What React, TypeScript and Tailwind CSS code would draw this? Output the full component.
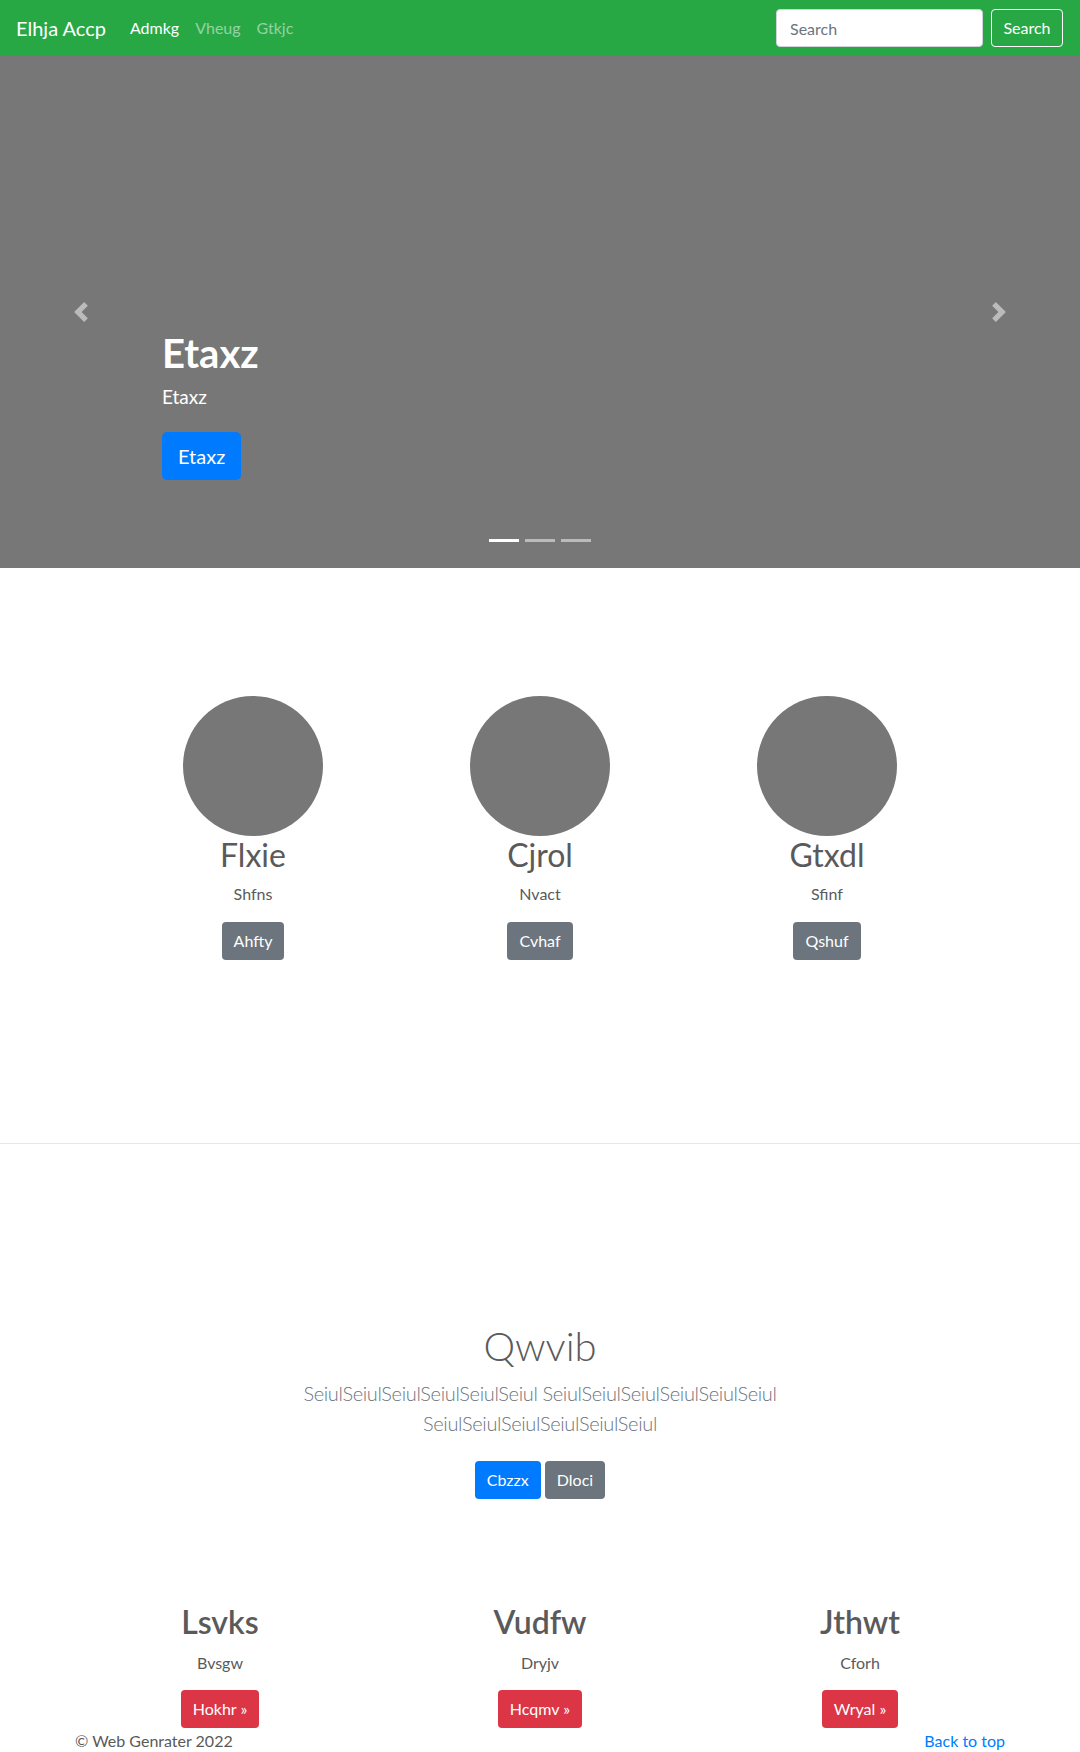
const font = "font-['Lato','Liberation_Sans',sans-serif]";

function Chevron({ dir }: { dir: "prev" | "next" }) {
  return (
    <svg width="20" height="20" viewBox="0 0 8 8" className="opacity-50">
      {dir === "prev" ? (
        <path fill="#fff" d="M5.25 0l-4 4 4 4 1.5-1.5L4.25 4l2.5-2.5L5.25 0z" />
      ) : (
        <path fill="#fff" d="M2.75 0l-1.5 1.5L3.75 4l-2.5 2.5L2.75 8l4-4-4-4z" />
      )}
    </svg>
  );
}

const people = [
  { name: "Flxie", sub: "Shfns", btn: "Ahfty" },
  { name: "Cjrol", sub: "Nvact", btn: "Cvhaf" },
  { name: "Gtxdl", sub: "Sfinf", btn: "Qshuf" },
];

const features = [
  { name: "Lsvks", sub: "Bvsgw", btn: "Hokhr" },
  { name: "Vudfw", sub: "Dryjv", btn: "Hcqmv" },
  { name: "Jthwt", sub: "Cforh", btn: "Wryal" },
];

export default function App() {
  return (
    <div className={`${font} w-[1080px] h-[1752px] overflow-hidden bg-white text-[#5a5a5a]`}>
      {/* Navbar */}
      <nav className="h-14 bg-[#28a745] flex items-center pl-4 pr-[17px]">
        <span className="text-white text-[20px] leading-[30px] mr-4">Elhja Accp</span>
        <div className="flex text-[16px]">
          <span className="px-2 text-white">Admkg</span>
          <span className="px-2 text-white/50">Vheug</span>
          <span className="px-2 text-white/50">Gtkjc</span>
        </div>
        <div className="ml-auto flex items-center gap-2">
          <input
            placeholder="Search"
            className="w-[207px] h-[38px] rounded bg-white border border-[#ced4da] px-[13px] text-[16px] text-[#495057] placeholder:text-[#6c757d] outline-none"
          />
          <button className="w-[72px] h-[38px] rounded border border-white text-white text-[16px]">
            Search
          </button>
        </div>
      </nav>

      {/* Carousel */}
      <div className="relative h-[512px] bg-[#777]">
        <div className="absolute left-0 top-0 h-full w-[15%] flex items-center justify-center">
          <Chevron dir="prev" />
        </div>
        <div className="absolute right-0 top-0 h-full w-[15%] flex items-center justify-center">
          <Chevron dir="next" />
        </div>
        <div className="absolute left-[15%] bottom-[88px] flex flex-col items-start text-white">
          <h1 className="text-[40px] leading-[48px] font-bold mb-2">Etaxz</h1>
          <p className="text-[19px] leading-6">Etaxz</p>
          <button className="mt-[23px] h-12 px-4 rounded-[5px] bg-[#007bff] text-[20px] text-white">
            Etaxz
          </button>
        </div>
        <div className="absolute bottom-[26px] left-0 right-0 flex justify-center gap-[6px]">
          <span className="w-[30px] h-[3px] bg-white" />
          <span className="w-[30px] h-[3px] bg-white/50" />
          <span className="w-[30px] h-[3px] bg-white/50" />
        </div>
      </div>

      {/* Marketing circles */}
      <section className="pt-[128px] pb-[183px]">
        <div className="mx-auto w-[861px] grid grid-cols-3">
          {people.map((p) => (
            <div key={p.name} className="flex flex-col items-center text-center">
              <div className="w-[140px] h-[140px] rounded-full bg-[#777]" />
              <h2 className="text-[32px] leading-[38px] mb-2">{p.name}</h2>
              <p className="text-[16px] leading-6 mb-4">{p.sub}</p>
              <button className="h-[38px] px-3 rounded bg-[#6c757d] text-white text-[16px]">
                {p.btn}
              </button>
            </div>
          ))}
        </div>
      </section>

      <hr className="border-t border-[#e6e6e6]" />

      {/* Jumbotron */}
      <section className="pt-[178px] flex flex-col items-center text-center">
        <h1 className="text-[40px] leading-[48px] font-light mb-2">Qwvib</h1>
        <p className="text-[20px] leading-[30px] font-light tracking-[-0.35px] text-[#6c757d]">
          SeiulSeiulSeiulSeiulSeiulSeiul SeiulSeiulSeiulSeiulSeiulSeiul
          <br />
          SeiulSeiulSeiulSeiulSeiulSeiul
        </p>
        <div className="mt-[23px] flex gap-1">
          <button className="h-[38px] px-3 rounded bg-[#007bff] text-white text-[16px]">Cbzzx</button>
          <button className="h-[38px] px-3 rounded bg-[#6c757d] text-white text-[16px]">Dloci</button>
        </div>
      </section>

      {/* Features */}
      <section className="pt-[104px] mx-auto w-[960px] grid grid-cols-3">
        {features.map((f) => (
          <div key={f.name} className="flex flex-col items-center text-center">
            <h2 className="text-[32px] leading-[38px] font-semibold mb-[10px]">{f.name}</h2>
            <p className="text-[16px] leading-6 mb-[15px]">{f.sub}</p>
            <button className="h-[38px] px-3 rounded bg-[#dc3545] text-white text-[16px]">
              {f.btn} »
            </button>
          </div>
        ))}
      </section>

      {/* Footer */}
      <footer className="mx-auto w-[930px] pt-px flex justify-between text-[16px] leading-6">
        <p>© Web Genrater 2022</p>
        <p className="text-[#007bff]">Back to top</p>
      </footer>
    </div>
  );
}
